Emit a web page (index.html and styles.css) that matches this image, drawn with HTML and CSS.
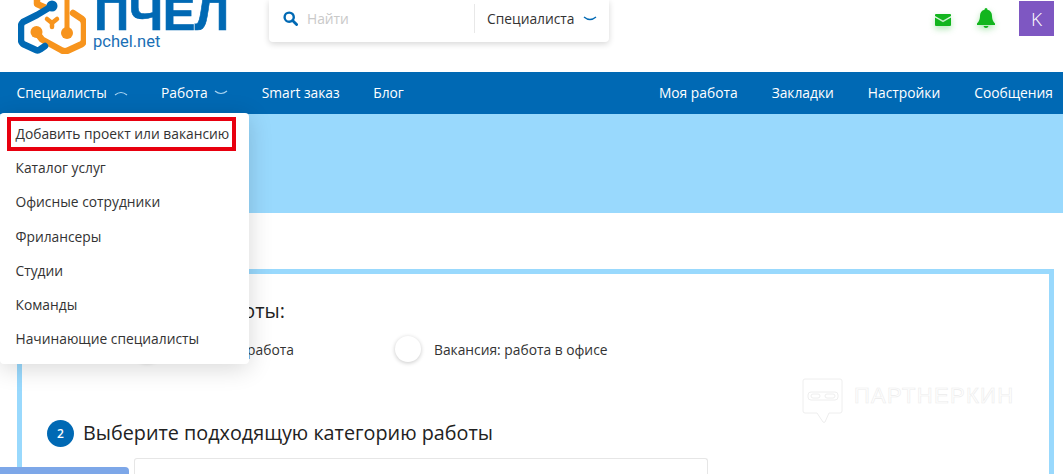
FILE: index.html
```html
<!DOCTYPE html>
<html lang="ru">
<head>
<meta charset="utf-8">
<title>Пчел</title>
<link rel="stylesheet" href="styles.css">
</head>
<body>
<header class="top">
  <a class="logo">
    <svg class="logo-mark" width="68" height="54" viewBox="18 0 68 54" fill="none">
      <g stroke="#f7941d" stroke-linecap="round" stroke-linejoin="round">
        <path d="M73 13 L82 19 Q84 21 84 24 V40 Q84 42 82 44 L68 50.500 Q65 52 62 50.500 L42 39.500 L37 33" stroke-width="6.500"/>
        <path d="M67 -6 V33" stroke-width="5"/>
        <path d="M37 -6 V4 L46 8" stroke-width="6.500"/>
        <path d="M47 19 L52 23 L57 19 M52 23 V27" stroke-width="4.500"/>
      </g>
      <circle cx="67" cy="33" r="6" fill="#f7941d"/>
      <circle cx="36.500" cy="32" r="6" fill="#f7941d"/>
      <path d="M52 6 L37 15 L23 22 Q21 24 21 26 V40 Q21 42 23 44 L36 50 Q38 51 40 49.500 L45 46" stroke="#0069b4" stroke-width="6.500" stroke-linecap="round" stroke-linejoin="round"/>
      <circle cx="52" cy="6" r="5.500" fill="#0069b4"/>
    </svg>
    <span class="logo-text">
      <span class="logo-name">ПЧЕЛ</span>
      <span class="logo-url">pchel.net</span>
    </span>
  </a>
  <div class="search">
    <div class="search-field">
      <svg class="search-icon" width="15" height="15" viewBox="0 0 15 15" fill="none"><circle cx="6.200" cy="6.200" r="4.600" stroke="#0069b4" stroke-width="2.400"/><path d="M9.800 9.800 L13.600 13.600" stroke="#0069b4" stroke-width="2.800" stroke-linecap="round"/></svg>
      <span class="search-ph">Найти</span>
    </div>
    <div class="search-type">
      <span>Специалиста</span>
      <svg class="chev" width="14" height="6" viewBox="0 0 14 6" fill="none"><path d="M1 1 Q7 6 13 1" stroke="#0069b4" stroke-width="1.400"/></svg>
    </div>
  </div>
  <div class="top-icons">
    <svg class="ic-mail" width="16" height="12" viewBox="0 0 16 12"><path d="M1 0 H15 Q16 0 16 1 V2 L8 6.500 L0 2 V1 Q0 0 1 0Z M0 3.600 L8 8.200 L16 3.600 V11 Q16 12 15 12 H1 Q0 12 0 11Z" fill="#12b51e"/></svg>
    <svg class="ic-bell" width="18" height="20" viewBox="0 0 18 20"><path d="M9 0 Q10.500 0 10.500 1.800 Q15 3 15 8 Q15 13 18 15.500 V17 H0 V15.500 Q3 13 3 8 Q3 3 7.500 1.800 Q7.500 0 9 0Z M6.500 18 H11.500 Q11 20 9 20 Q7 20 6.500 18Z" fill="#12b51e"/></svg>
    <div class="avatar">K</div>
  </div>
</header>

<nav class="nav">
  <div class="nav-left">
    <a class="nav-item">Специалисты <svg class="chev" width="14" height="6" viewBox="0 0 14 6" fill="none"><path d="M1 5 Q7 0 13 5" stroke="#a9d4f0" stroke-width="1.200"/></svg></a>
    <a class="nav-item">Работа <svg class="chev" width="14" height="6" viewBox="0 0 14 6" fill="none"><path d="M1 1 Q7 6 13 1" stroke="#a9d4f0" stroke-width="1.200"/></svg></a>
    <a class="nav-item">Smart заказ</a>
    <a class="nav-item">Блог</a>
  </div>
  <div class="nav-right">
    <a class="nav-item">Моя работа</a>
    <a class="nav-item">Закладки</a>
    <a class="nav-item">Настройки</a>
    <a class="nav-item">Сообщения</a>
  </div>
</nav>

<ul class="menu">
  <li class="menu-item marked">Добавить проект или вакансию</li>
  <li class="menu-item">Каталог услуг</li>
  <li class="menu-item">Офисные сотрудники</li>
  <li class="menu-item">Фрилансеры</li>
  <li class="menu-item">Студии</li>
  <li class="menu-item">Команды</li>
  <li class="menu-item">Начинающие специалисты</li>
</ul>

<div class="hero"></div>

<main class="card">
  <section class="step">
    <span class="step-num">1</span>
    <h2 class="step-title">Укажите тип работы:</h2>
  </section>
  <div class="radios">
    <label class="radio"><span class="radio-dot"></span>Удалённая работа</label>
    <label class="radio"><span class="radio-dot"></span>Вакансия: работа в офисе</label>
  </div>
  <section class="step step-second">
    <span class="step-num">2</span>
    <h2 class="step-title">Выберите подходящую категорию работы</h2>
  </section>
  <div class="cat-box"></div>
</main>

<div class="side-box"></div>

<div class="watermark">
  <svg width="41" height="46" viewBox="0 0 41 46" fill="none" stroke="#eeeeee" stroke-width="1"><path d="M3 1 H38 Q40 1 40 3 V33 Q40 35 38 35 H27 L23 44 Q22 45 21 44 L15 35 H3 Q1 35 1 33 V3 Q1 1 3 1Z"/><rect x="6" y="14" width="30" height="8" rx="3"/><rect x="9" y="16" width="9" height="4" rx="2"/><rect x="23" y="16" width="10" height="4" rx="2"/></svg>
  <span class="wm-text">ПАРТНЕРКИН</span>
</div>
</body>
</html>
```
FILE: styles.css
```css
*, *::before, *::after { box-sizing: border-box; }
html, body { margin: 0; padding: 0; }
html { overflow: hidden; }
body {
  width: 1063px;
  height: 474px;
  overflow: hidden;
  position: relative;
  background: #fff;
  font-family: "Open Sans", "Noto Sans", sans-serif;
  color: #222;
}
.top {
  height: 72px;
  display: flex;
  align-items: flex-start;
  padding-left: 18px;
  overflow: hidden;
}
.logo { display: flex; gap: 8px; width: 251px; flex: none; }
.logo-mark { flex: none; }
.logo-text { display: flex; flex-direction: column; margin-top: -5px; }
.logo-name {
  font: bold 49px/37px "Liberation Sans", sans-serif;
  color: #0069b4;
  letter-spacing: -0.5px;
  -webkit-text-stroke: 0.6px #0069b4;
}
.logo-url {
  font: 16.500px/18px "Roboto", sans-serif;
  color: #1a6fb5;
  margin-left: -1px;
  margin-top: 1px;
}
.search {
  width: 340px;
  height: 42px;
  flex: none;
  display: flex;
  background: #fff;
  border-radius: 0 0 4px 4px;
  box-shadow: 0 2px 6px rgba(0,0,0,.16);
  font-size: 13.800px;
}
.search-field {
  width: 205px;
  height: 36px;
  display: flex;
  align-items: center;
  gap: 9px;
  padding-left: 14px;
}
.search-ph { color: #c9c9c9; }
.search-type {
  flex: 1;
  height: 29px;
  margin-top: 4px;
  border-left: 1px solid #e8e8e8;
  display: flex;
  align-items: center;
  gap: 8px;
  padding-left: 12px;
  color: #333;
}
.top-icons {
  margin-left: auto;
  display: flex;
  align-items: flex-start;
  padding-right: 9px;
}
.ic-mail { margin-top: 14px; filter: drop-shadow(0 3px 3px rgba(18,181,30,.35)); }
.ic-bell { margin: 8px 0 0 26px; filter: drop-shadow(0 3px 3px rgba(18,181,30,.35)); }
.avatar {
  width: 35px;
  height: 35px;
  margin: 1px 0 0 24px;
  background: #7e57c2;
  color: #fff;
  font-size: 19px;
  font-weight: 300;
  display: flex;
  align-items: center;
  justify-content: center;
}
.nav {
  height: 42px;
  background: #0069b4;
  display: flex;
  justify-content: space-between;
  align-items: center;
  padding: 0 10px 2px 16.500px;
  color: #fff;
  font-size: 13.800px;
}
.nav-left { display: flex; gap: 33.500px; align-items: center; }
.nav-right { display: flex; gap: 34px; align-items: center; }
.nav-item { color: #fff; white-space: nowrap; }
.nav-item .chev { margin-left: 3px; vertical-align: 2px; }
.hero { height: 99px; background: #99d9fd; }
.card {
  margin: 56px 9px 0 17px;
  height: 205px;
  border: 5px solid #99d9fd;
  border-bottom: 0;
  overflow: hidden;
  padding: 23px 0 0 25px;
}
.step { display: flex; align-items: center; gap: 9px; }
.step-second { margin-top: 57px; }
.step-title { margin: 0; font-weight: 400; font-size: 19.800px; line-height: 28px; color: #222; }
.radios { display: flex; font-size: 13.800px; color: #333; margin-top: 11px; height: 26px; }
.radio { display: flex; align-items: center; gap: 11px; }
.radio:first-child { width: 348px; padding-left: 87px; }
.radio-dot {
  width: 26px;
  height: 26px;
  border-radius: 50%;
  background: #fff;
  box-shadow: 0 1px 4px rgba(0,0,0,.22);
}
.radio:last-child { gap: 13px; }
.step-num {
  width: 27px;
  height: 27px;
  border-radius: 50%;
  background: #0069b4;
  color: #fff;
  font-size: 12px;
  font-weight: 600;
  display: flex;
  align-items: center;
  justify-content: center;
}
.cat-box {
  width: 574px;
  height: 16px;
  margin: 11px 0 0 87px;
  background: #fff;
  border: 1px solid #e6e6e6;
  border-bottom: 0;
  border-radius: 3px 3px 0 0;
}
.side-box {
  position: absolute;
  left: 0;
  bottom: 0;
  width: 129px;
  height: 7px;
  background: #7da7e8;
  border-radius: 0 4px 0 0;
}
.menu {
  position: absolute;
  z-index: 2;
  left: 0;
  top: 113px;
  width: 249px;
  height: 251px;
  margin: 0;
  padding: 4px 0 0 0;
  list-style: none;
  background: #fff;
  border-radius: 4px;
  box-shadow: 0 4px 24px rgba(0,0,0,.16);
  font-size: 13.800px;
  color: #333;
}
.menu-item { height: 34.200px; line-height: 34px; padding-left: 15.500px; white-space: nowrap; }
.marked { position: relative; }
.marked::after {
  content: "";
  position: absolute;
  left: 7px;
  top: 0;
  width: 229px;
  height: 34px;
  border: 4px solid #e8000f;
}
.watermark {
  position: absolute;
  left: 802px;
  top: 378px;
  display: flex;
  gap: 11px;
}
.wm-text {
  font: 22px/1 "Liberation Sans", sans-serif;
  letter-spacing: 1.300px;
  color: transparent;
  -webkit-text-stroke: 0.6px #ececec;
  margin-top: 7px;
}
```
